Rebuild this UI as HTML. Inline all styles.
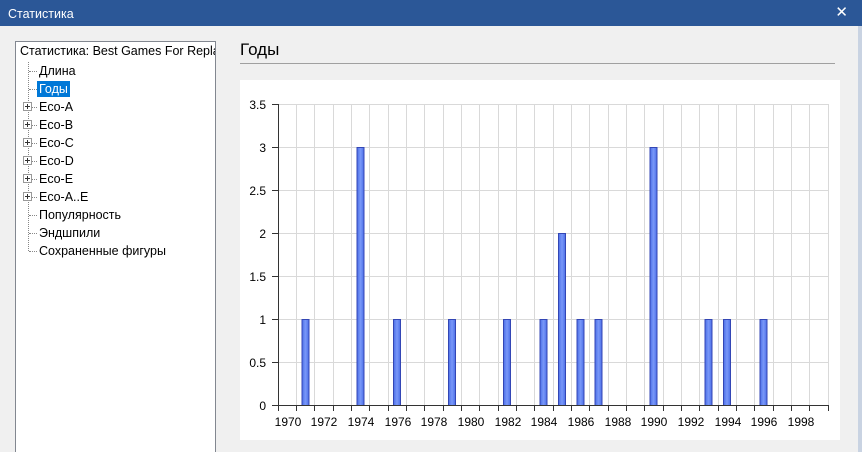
<!DOCTYPE html>
<html><head><meta charset="utf-8"><style>
html,body{margin:0;width:862px;height:452px;overflow:hidden}
body{background:#f0f0f0;font-family:"Liberation Sans","DejaVu Sans",sans-serif;position:relative}
.tb{position:absolute;left:0;top:0;width:862px;height:26px;background:#2b5797;color:#fff;font-size:12.5px}
.tb span{position:absolute;left:8px;top:7px}
.tb b{position:absolute;right:14px;top:3px;font-size:15px}
.rb{position:absolute;left:858px;top:26px;width:4px;height:426px;background:#c9d3e2}
.tree{position:absolute;left:15px;top:41px;width:199px;height:411px;background:#fff;border:1px solid #828790;border-bottom:none;font-size:12.5px;color:#000}
.it{position:absolute;left:21px;white-space:nowrap;line-height:16px;padding:0 2px}
.sel{background:#0078d7;color:#fff}
.pl{position:absolute;left:7px;width:7px;height:7px;border:1px solid #999;background:#fff}
.pl:before{content:"";position:absolute;left:1px;top:3px;width:5px;height:1px;background:#333}
.pl:after{content:"";position:absolute;left:3px;top:1px;width:1px;height:5px;background:#333}
.dh{position:absolute;left:13px;width:8px;border-top:1px dotted #888}
.h{position:absolute;left:240px;top:40px;font-size:17px;color:#000}
.ln{position:absolute;left:240px;top:63px;width:595px;height:1px;background:#a0a0a0}
.ch{position:absolute;left:240px;top:80px;width:600px;height:360px;background:#fff}
</style></head><body>
<div class="tb"><span>Статистика</span><b>✕</b></div>
<div class="rb"></div>
<div class="tree">
<div style="position:absolute;left:4px;top:2px;white-space:nowrap;width:195px;overflow:hidden">Статистика: Best Games For Replay T</div>
<div style="position:absolute;left:12px;top:20px;height:189px;border-left:1px dotted #888"></div>
<div class="dh" style="top:29px"></div><div class="it" style="top:21px">Длина</div>
<div class="dh" style="top:47px"></div><div class="it sel" style="top:39px">Годы</div>
<div class="dh" style="top:65px"></div><div class="pl" style="top:60px"></div><div class="it" style="top:57px">Eco-A</div>
<div class="dh" style="top:83px"></div><div class="pl" style="top:78px"></div><div class="it" style="top:75px">Eco-B</div>
<div class="dh" style="top:101px"></div><div class="pl" style="top:96px"></div><div class="it" style="top:93px">Eco-C</div>
<div class="dh" style="top:119px"></div><div class="pl" style="top:114px"></div><div class="it" style="top:111px">Eco-D</div>
<div class="dh" style="top:137px"></div><div class="pl" style="top:132px"></div><div class="it" style="top:129px">Eco-E</div>
<div class="dh" style="top:155px"></div><div class="pl" style="top:150px"></div><div class="it" style="top:147px">Eco-A..E</div>
<div class="dh" style="top:173px"></div><div class="it" style="top:165px">Популярность</div>
<div class="dh" style="top:191px"></div><div class="it" style="top:183px">Эндшпили</div>
<div class="dh" style="top:209px"></div><div class="it" style="top:201px">Сохраненные фигуры</div>
</div>
<div class="h">Годы</div>
<div class="ln"></div>
<div class="ch"></div>
<svg style="position:absolute;left:0;top:0" width="862" height="452" font-family="Liberation Sans, sans-serif" font-size="12">
<defs><linearGradient id="g" x1="0" x2="1"><stop offset="0" stop-color="#4a6ee8"/><stop offset=".5" stop-color="#7a98f8"/><stop offset="1" stop-color="#4a6ee8"/></linearGradient></defs>
<g stroke="#d9d9d9" stroke-width="1">
<path d="M296.5 104V405M314.5 104V405M333.5 104V405M351.5 104V405M369.5 104V405M388.5 104V405M406.5 104V405M424.5 104V405M443.5 104V405M461.5 104V405M479.5 104V405M498.5 104V405M516.5 104V405M534.5 104V405M553.5 104V405M571.5 104V405M589.5 104V405M608.5 104V405M626.5 104V405M644.5 104V405M663.5 104V405M681.5 104V405M699.5 104V405M718.5 104V405M736.5 104V405M754.5 104V405M773.5 104V405M791.5 104V405M809.5 104V405M828.5 104V405"/>
<path d="M278 104.5H828M278 147.5H828M278 190.5H828M278 233.5H828M278 276.5H828M278 319.5H828M278 362.5H828"/>
</g>
<g fill="url(#g)" stroke="#3346b5" stroke-width="1">
<rect x="302" y="319.5" width="7" height="86"/>
<rect x="357" y="147.5" width="7" height="258"/>
<rect x="393.5" y="319.5" width="7" height="86"/>
<rect x="448.5" y="319.5" width="7" height="86"/>
<rect x="503.5" y="319.5" width="7" height="86"/>
<rect x="540" y="319.5" width="7" height="86"/>
<rect x="558.5" y="233.5" width="7" height="172"/>
<rect x="577" y="319.5" width="7" height="86"/>
<rect x="595" y="319.5" width="7" height="86"/>
<rect x="650" y="147.5" width="7" height="258"/>
<rect x="705" y="319.5" width="7" height="86"/>
<rect x="723.5" y="319.5" width="7" height="86"/>
<rect x="760" y="319.5" width="7" height="86"/>
</g>
<g stroke="#333" stroke-width="1">
<path d="M278.5 104V411M272 405.5H829"/>
<path d="M272 104.5H278M272 147.5H278M272 190.5H278M272 233.5H278M272 276.5H278M272 319.5H278M272 362.5H278"/>
<path d="M296.5 405V411M314.5 405V411M333.5 405V411M351.5 405V411M369.5 405V411M388.5 405V411M406.5 405V411M424.5 405V411M443.5 405V411M461.5 405V411M479.5 405V411M498.5 405V411M516.5 405V411M534.5 405V411M553.5 405V411M571.5 405V411M589.5 405V411M608.5 405V411M626.5 405V411M644.5 405V411M663.5 405V411M681.5 405V411M699.5 405V411M718.5 405V411M736.5 405V411M754.5 405V411M773.5 405V411M791.5 405V411M809.5 405V411M828.5 405V411"/>
</g>
<g fill="#000" text-anchor="end">
<text x="266" y="109">3.5</text><text x="266" y="152">3</text><text x="266" y="195">2.5</text><text x="266" y="238">2</text><text x="266" y="281">1.5</text><text x="266" y="324">1</text><text x="266" y="367">0.5</text><text x="266" y="410">0</text>
</g>
<g fill="#000" text-anchor="middle">
<text x="288" y="426">1970</text><text x="324" y="426">1972</text><text x="361" y="426">1974</text><text x="398" y="426">1976</text><text x="434" y="426">1978</text><text x="471" y="426">1980</text><text x="508" y="426">1982</text><text x="544" y="426">1984</text><text x="581" y="426">1986</text><text x="618" y="426">1988</text><text x="654" y="426">1990</text><text x="691" y="426">1992</text><text x="728" y="426">1994</text><text x="764" y="426">1996</text><text x="801" y="426">1998</text>
</g>
</svg>
</body></html>
